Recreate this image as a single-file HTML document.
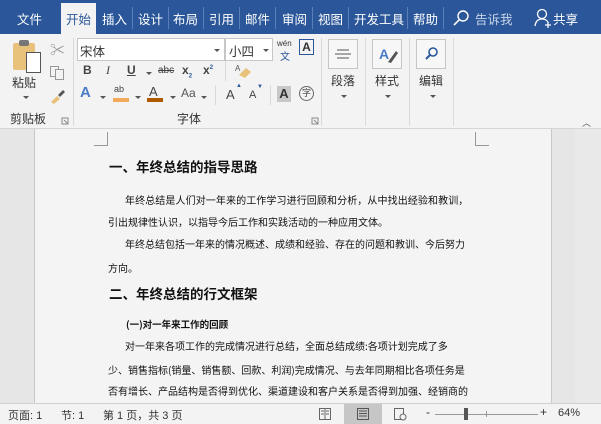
<!DOCTYPE html>
<html><head><meta charset="utf-8"><style>
*{margin:0;padding:0;box-sizing:border-box}
body{width:601px;height:424px;overflow:hidden;position:relative;background:#e6e6e6;font-family:"Liberation Sans","Noto Sans CJK SC",sans-serif;color:#222}
.a{position:absolute;white-space:nowrap}
#tabs{position:absolute;left:0;top:0;width:601px;height:34px;background:#2b579a}
.t{position:absolute;top:9px;color:#fff;font-size:12.5px}
.sep{position:absolute;top:7px;width:1px;height:22px;background:#5b7fb8}
#rib{position:absolute;left:0;top:34px;width:601px;height:95px;background:#f3f3f3;border-bottom:1px solid #d6d6d6}
.gs{position:absolute;top:4px;width:1px;height:88px;background:#dadada}
.lbl{font-size:12px;color:#333}
.dd{position:absolute;width:0;height:0;border-left:3px solid transparent;border-right:3px solid transparent;border-top:3px solid #555}
.big{position:absolute;top:5px;width:30px;height:30px;border:1px solid #c6c6c6;background:#f7f7f7}
#page{position:absolute;left:34px;top:129px;width:518px;height:274px;background:#f4f4f4;border-left:1px solid #c8c8c8;border-right:1px solid #c8c8c8}
.p{position:absolute;font-size:10px;color:#111;white-space:nowrap;font-family:"Noto Sans CJK SC",sans-serif}
.h{position:absolute;font-size:13.5px;font-weight:bold;color:#111;white-space:nowrap;font-family:"Noto Sans CJK SC",sans-serif}
#sb{position:absolute;left:0;top:403px;width:601px;height:21px;background:#f3f3f3;border-top:1px solid #d0d0d0;font-size:11px;color:#333}
</style></head><body>
<div id="tabs">
<div class="t" style="left:17px">文件</div>
<div style="position:absolute;left:61px;top:3px;width:35px;height:31px;background:#f3f3f3"></div>
<div class="t" style="left:66px;color:#2b579a">开始</div>
<div class="t" style="left:102px">插入</div><div class="sep" style="left:132px"></div>
<div class="t" style="left:138px">设计</div><div class="sep" style="left:168px"></div>
<div class="t" style="left:173px">布局</div><div class="sep" style="left:203px"></div>
<div class="t" style="left:209px">引用</div><div class="sep" style="left:239px"></div>
<div class="t" style="left:245px">邮件</div><div class="sep" style="left:275px"></div>
<div class="t" style="left:282px">审阅</div><div class="sep" style="left:312px"></div>
<div class="t" style="left:318px">视图</div><div class="sep" style="left:348px"></div>
<div class="t" style="left:354px">开发工具</div><div class="sep" style="left:407px"></div>
<div class="t" style="left:413px">帮助</div><div class="sep" style="left:443px"></div>
<svg class="a" style="left:452px;top:9px" width="18" height="18"><circle cx="11" cy="7" r="5" fill="none" stroke="#fff" stroke-width="1.4"/><path d="M7 11 L2 16" stroke="#fff" stroke-width="1.6"/></svg>
<div class="t" style="left:475px;color:#c9d5ea">告诉我</div>
<svg class="a" style="left:533px;top:8px" width="20" height="20"><circle cx="9" cy="6" r="4.5" fill="none" stroke="#fff" stroke-width="1.3"/><path d="M2 18 Q3 11 9 11 Q13 11 15 14" fill="none" stroke="#fff" stroke-width="1.3"/><path d="M15 14v6M12 17h6" stroke="#fff" stroke-width="1.3"/></svg>
<div class="t" style="left:553px">共享</div>
</div>

<div id="rib">
<!-- clipboard -->
<div class="a" style="left:13px;top:9px;width:22px;height:27px;background:#e8c27a;border-radius:2px"></div>
<div class="a" style="left:19px;top:6px;width:10px;height:6px;background:#777;border-radius:2px"></div>
<div class="a" style="left:26px;top:18px;width:15px;height:21px;background:#fff;border:1px solid #555"></div>
<div class="a lbl" style="left:12px;top:40px">粘贴</div>
<div class="dd" style="left:23px;top:62px"></div>
<div class="a" style="left:50px;top:5px;color:#999;font-size:15px">✂</div>
<svg class="a" style="left:49px;top:31px" width="16" height="16"><rect x="1.5" y="1.5" width="8" height="10" fill="none" stroke="#999"/><rect x="6.5" y="4.5" width="8" height="10" fill="#f3f3f3" stroke="#999"/></svg>
<svg class="a" style="left:49px;top:53px" width="17" height="17"><path d="M2 15 L8 9 L11 12 L5 17Z" fill="#e8c27a"/><path d="M9 8 L14 3 L16 5 L11 10Z" fill="#555"/></svg>
<div class="a lbl" style="left:10px;top:76px">剪贴板</div>
<svg class="a" style="left:61px;top:83px" width="8" height="8"><path d="M1 1h6v6H1z" fill="none" stroke="#888"/><path d="M3 3l4 4" stroke="#888"/></svg>
<div class="gs" style="left:73px"></div>
<!-- font -->
<div class="a" style="left:77px;top:4px;width:148px;height:23px;background:#fff;border:1px solid #c6c6c6"></div>
<div class="a" style="left:80px;top:7px;font-size:12.5px;color:#333">宋体</div>
<div class="dd" style="left:214px;top:15px"></div>
<div class="a" style="left:225px;top:4px;width:48px;height:23px;background:#fff;border:1px solid #c6c6c6"></div>
<div class="a" style="left:229px;top:7px;font-size:12.5px;color:#333">小四</div>
<div class="dd" style="left:263px;top:15px"></div>
<div class="a" style="left:277px;top:5px;font-size:8px;color:#333">wén</div>
<div class="a" style="left:280px;top:14px;font-size:10px;color:#2b579a">文</div>
<div class="a" style="left:299px;top:5px;width:15px;height:16px;border:1px solid #2b579a;font-size:12px;font-weight:bold;text-align:center;line-height:14px;color:#333">A</div>
<div class="a" style="left:83px;top:29px;font-size:12px;font-weight:bold;color:#444">B</div>
<div class="a" style="left:106px;top:29px;font-size:12px;font-style:italic;font-family:'Liberation Serif',serif;color:#444">I</div>
<div class="a" style="left:127px;top:29px;font-size:12px;text-decoration:underline;font-weight:bold;color:#444">U</div>
<div class="dd" style="left:146px;top:38px"></div>
<div class="a" style="left:158px;top:31px;font-size:10px;text-decoration:line-through;color:#444">abc</div>
<div class="a" style="left:182px;top:29px;font-size:12px;font-weight:bold;color:#444">x<sub style="font-size:6px;color:#2b579a">2</sub></div>
<div class="a" style="left:203px;top:29px;font-size:12px;font-weight:bold;color:#444">x<sup style="font-size:6px;color:#2b579a">2</sup></div>
<div class="a" style="left:225px;top:27px;width:1px;height:20px;background:#dadada"></div>
<svg class="a" style="left:234px;top:29px" width="18" height="16"><text x="1" y="8" font-size="8" fill="#555" font-family="Liberation Sans">A</text><path d="M5 12 L12 5 L17 9 L11 15Z" fill="#e8c27a"/></svg>
<div class="a" style="left:80px;top:50px;font-size:15px;color:#4a7cc7;font-weight:bold">A</div>
<div class="dd" style="left:100px;top:62px"></div>
<div class="a" style="left:114px;top:50px;font-size:9px;color:#444">ab</div>
<div class="a" style="left:113px;top:64px;width:16px;height:4px;background:#f2a95a"></div>
<div class="dd" style="left:135px;top:62px"></div>
<div class="a" style="left:149px;top:50px;font-size:13px;color:#444">A</div>
<div class="a" style="left:147px;top:64px;width:16px;height:4px;background:#b05a00"></div>
<div class="dd" style="left:170px;top:62px"></div>
<div class="a" style="left:181px;top:52px;font-size:12px;color:#555">Aa</div>
<div class="dd" style="left:201px;top:62px"></div>
<div class="a" style="left:215px;top:51px;width:1px;height:20px;background:#dadada"></div>
<div class="a" style="left:226px;top:53px;font-size:13px;color:#444">A</div><div class="a" style="left:236px;top:49px;font-size:6px;color:#2b579a">▲</div>
<div class="a" style="left:249px;top:55px;font-size:11px;color:#444">A</div><div class="a" style="left:257px;top:50px;font-size:6px;color:#2b579a">▼</div>
<div class="a" style="left:270px;top:51px;width:1px;height:20px;background:#dadada"></div>
<div class="a" style="left:277px;top:52px;width:14px;height:16px;background:#c8c8c8;font-size:13px;font-weight:bold;color:#333;text-align:center;line-height:16px">A</div>
<div class="a" style="left:299px;top:52px;width:15px;height:15px;border:1px solid #666;border-radius:50%;font-size:9px;text-align:center;line-height:13px;color:#444">字</div>
<div class="a lbl" style="left:177px;top:76px">字体</div>
<svg class="a" style="left:311px;top:83px" width="8" height="8"><path d="M1 1h6v6H1z" fill="none" stroke="#888"/><path d="M3 3l4 4" stroke="#888"/></svg>
<div class="gs" style="left:321px"></div>
<!-- big buttons -->
<div class="big" style="left:328px"><svg width="28" height="28"><path d="M8 10h12M6 14h16M8 18h12" stroke="#555"/></svg></div>
<div class="a lbl" style="left:331px;top:38px">段落</div><div class="dd" style="left:341px;top:61px"></div>
<div class="gs" style="left:365px"></div>
<div class="big" style="left:372px"><svg width="28" height="28"><text x="6" y="19" font-size="14" font-weight="bold" fill="#4a7cc7" font-family="Liberation Sans">A</text><path d="M15 22 L23 11 L25 13 L18 23Z" fill="#555"/></svg></div>
<div class="a lbl" style="left:375px;top:38px">样式</div><div class="dd" style="left:385px;top:61px"></div>
<div class="gs" style="left:409px"></div>
<div class="big" style="left:416px"><svg width="28" height="28"><circle cx="16" cy="12" r="4" fill="none" stroke="#2b579a" stroke-width="1.6"/><path d="M13 15 L9 19" stroke="#2b579a" stroke-width="2"/></svg></div>
<div class="a lbl" style="left:419px;top:38px">编辑</div><div class="dd" style="left:430px;top:61px"></div>
<div class="gs" style="left:453px"></div>
<div class="a" style="left:582px;top:82px;font-size:9px;color:#555">︿</div>
</div>

<div style="position:absolute;left:575px;top:129px;width:26px;height:274px;background:#e9e9e9"></div>
<div id="page"></div>
<div class="a" style="left:94px;top:132px;width:14px;height:14px;border-right:1px solid #999;border-bottom:1px solid #999"></div>
<div class="a" style="left:475px;top:132px;width:14px;height:14px;border-left:1px solid #999;border-bottom:1px solid #999"></div>

<div class="h" style="left:109px;top:156px">一、年终总结的指导思路</div>
<div class="p" style="left:125px;top:192px;letter-spacing:0.1px">年终总结是人们对一年来的工作学习进行回顾和分析，从中找出经验和教训，</div>
<div class="p" style="left:108px;top:214px">引出规律性认识，以指导今后工作和实践活动的一种应用文体。</div>
<div class="p" style="left:125px;top:236px">年终总结包括一年来的情况概述、成绩和经验、存在的问题和教训、今后努力</div>
<div class="p" style="left:108px;top:260px">方向。</div>
<div class="h" style="left:109px;top:283px">二、年终总结的行文框架</div>
<div class="p" style="left:126px;top:317px;font-weight:bold;font-size:9.5px">(一)对一年来工作的回顾</div>
<div class="p" style="left:125px;top:338px">对一年来各项工作的完成情况进行总结，全面总结成绩:各项计划完成了多</div>
<div class="p" style="left:108px;top:362px">少、销售指标(销量、销售额、回款、利润)完成情况、与去年同期相比各项任务是</div>
<div class="p" style="left:108px;top:383px">否有增长、产品结构是否得到优化、渠道建设和客户关系是否得到加强、经销商的</div>

<div id="sb">
<div class="a" style="left:8px;top:3px">页面: 1</div>
<div class="a" style="left:61px;top:3px">节: 1</div>
<div class="a" style="left:103px;top:3px">第 1 页，共 3 页</div>
<svg class="a" style="left:318px;top:3px" width="14" height="14"><rect x="1.5" y="1.5" width="11" height="11" fill="none" stroke="#666"/><path d="M7 1v12M3 4h3M3 7h3M8 4h3M8 7h3" stroke="#666"/></svg>
<div class="a" style="left:344px;top:0;width:38px;height:20px;background:#c6c6c6"></div>
<svg class="a" style="left:356px;top:3px" width="14" height="14"><rect x="1.5" y="1.5" width="11" height="11" fill="none" stroke="#555"/><path d="M3 4h8M3 6.5h8M3 9h8" stroke="#555"/></svg>
<svg class="a" style="left:393px;top:3px" width="14" height="14"><rect x="1.5" y="1.5" width="9" height="11" fill="none" stroke="#666"/><circle cx="10" cy="10" r="3" fill="#f3f3f3" stroke="#666"/></svg>
<div class="a" style="left:426px;top:1px;font-size:12px">-</div>
<div class="a" style="left:435px;top:10px;width:103px;height:1px;background:#999"></div>
<div class="a" style="left:486px;top:7px;width:1px;height:6px;background:#999"></div>
<div class="a" style="left:464px;top:4px;width:4px;height:12px;background:#555"></div>
<div class="a" style="left:540px;top:1px;font-size:12px">+</div>
<div class="a" style="left:558px;top:3px">64%</div>
</div>
</body></html>
